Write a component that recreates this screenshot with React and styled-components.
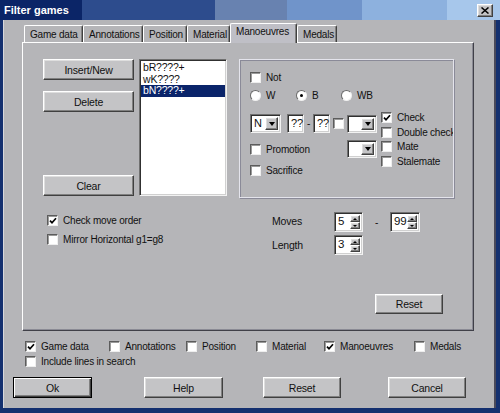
import React from "react";
import styled, { createGlobalStyle, css } from "styled-components";

const FACE = "#b5b5b8";
const BTN = "#c4c4c6";

const GlobalStyle = createGlobalStyle`
  html, body { margin: 0; padding: 0; }
  body {
    width: 500px;
    height: 413px;
    overflow: hidden;
    background: #14306f;
    font-family: "Liberation Sans", Arial, sans-serif;
    font-size: 10px;
    letter-spacing: -0.2px;
    color: #111;
  }
  * { box-sizing: border-box; }
`;

const raised = css`
  border: 1px solid;
  border-color: #ffffff #404040 #404040 #ffffff;
  box-shadow: inset -1px -1px 0 #808080, inset 1px 1px 0 #dedede;
`;

const sunken = css`
  border: 1px solid;
  border-color: #707070 #f2f2f2 #f2f2f2 #707070;
  box-shadow: inset 1px 1px 0 #303030, inset -1px -1px 0 #d0d0d0;
`;

const Window = styled.div`
  width: 500px;
  height: 413px;
  display: flex;
  flex-direction: column;
`;

const TitleBar = styled.div`
  height: 20px;
  flex: none;
  display: flex;
  align-items: center;
  padding: 0 7px 0 4px;
  background: linear-gradient(
    to right,
    #0b2567 0 82px,
    #2d4c8d 82px 215px,
    #6882b0 215px 287px,
    #7094ca 287px 362px,
    #8db1de 362px 447px,
    #a7c7eb 447px
  );
`;

const Title = styled.span`
  color: #fff;
  font-weight: bold;
  font-size: 11px;
  letter-spacing: 0;
`;

const CloseButton = styled.div`
  margin-left: auto;
  width: 16px;
  height: 13px;
  background: ${BTN};
  ${raised};
  display: flex;
  align-items: center;
  justify-content: center;
`;

const Frame = styled.div`
  flex: 1;
  display: flex;
  padding: 0 4px 5px 3px;
  background: #14306f;
`;

const Body = styled.div`
  flex: 1;
  display: flex;
  flex-direction: column;
  background: ${FACE};
  border-right: 2px solid #4a4a5a;
  border-left: 1px solid #d8d8dc;
`;

const TabArea = styled.div`
  margin: 3px 0 0 18px;
  width: 452px;
  display: flex;
  flex-direction: column;
`;

const TabStrip = styled.div`
  height: 19px;
  display: flex;
  align-items: flex-end;
  padding-left: 2px;
`;

const Tab = styled.div`
  width: ${(p) => p.$w}px;
  flex: none;
  height: ${(p) => (p.$active ? 20 : 17)}px;
  margin-bottom: ${(p) => (p.$active ? -1 : 0)}px;
  position: relative;
  z-index: ${(p) => (p.$active ? 2 : 1)};
  padding: ${(p) => (p.$active ? "2px 0 0 5px" : "3px 0 0 5px")};
  background: ${(p) => (p.$active ? "#bfbfc6" : FACE)};
  border-top: 1px solid #ffffff;
  border-left: 1px solid #ffffff;
  border-right: 1px solid #404040;
  box-shadow: inset -1px 0 0 #808080;
  border-radius: 2px 2px 0 0;
  white-space: nowrap;
`;

const Panel = styled.div`
  height: 289px;
  display: flex;
  flex-direction: column;
  padding: 16px 0 16px 20px;
  background: ${FACE};
  border: 1px solid;
  border-color: #ffffff #404048 #404048 #ffffff;
  box-shadow: inset -1px -1px 0 #8a8a94;
`;

const TopRow = styled.div`
  display: flex;
  align-items: flex-start;
  height: 139px;
`;

const ButtonCol = styled.div`
  width: 91px;
  height: 139px;
  flex: none;
  display: flex;
  flex-direction: column;
  padding-bottom: 2px;
`;

const Button = styled.div`
  width: ${(p) => p.$w}px;
  height: ${(p) => p.$h || 21}px;
  flex: none;
  margin-top: ${(p) => (p.$top === "auto" ? "auto" : `${p.$top || 0}px`)};
  margin-left: ${(p) => p.$left || 0}px;
  display: flex;
  align-items: center;
  justify-content: center;
  background: ${BTN};
  font-size: 10.5px;
  ${raised};
  ${(p) =>
    p.$default &&
    css`
      border: 1px solid #000;
      box-shadow: inset 1px 1px 0 #ffffff, inset -1px -1px 0 #404040,
        inset -2px -2px 0 #808080;
    `}
`;

const ListBox = styled.div`
  margin-left: 5px;
  width: 88px;
  height: 137px;
  flex: none;
  background: #fff;
  ${sunken};
  padding: 2px 1px;
  display: flex;
  flex-direction: column;
`;

const ListItem = styled.div`
  height: 11.5px;
  line-height: 11.5px;
  padding-left: 2px;
  font-size: 10.5px;
  background: ${(p) => (p.$selected ? "#0a246a" : "transparent")};
  color: ${(p) => (p.$selected ? "#fff" : "#111")};
`;

const GroupBox = styled.div`
  margin-left: 12px;
  width: 215px;
  height: 139px;
  flex: none;
  border: 1px solid #e4e4ec;
  box-shadow: inset 1px 1px 0 #8a8a98, 1px 1px 0 #8a8a98;
  padding: 12px 0 0 10px;
  display: flex;
  flex-direction: column;
  overflow: hidden;
`;

const Row = styled.div`
  display: flex;
  align-items: center;
  flex: none;
  margin-top: ${(p) => p.$top || 0}px;
  margin-left: ${(p) => p.$left || 0}px;
`;

const CheckRow = styled.div`
  display: flex;
  align-items: center;
  gap: 5px;
  height: 11px;
  flex: none;
  width: ${(p) => (p.$w ? `${p.$w}px` : "auto")};
  white-space: nowrap;
`;

const Box = styled.span`
  width: 11px;
  height: 11px;
  flex: none;
  background: #fff;
  border: 1px solid;
  border-color: #5c5c5c #eeeeee #eeeeee #5c5c5c;
  box-shadow: inset 1px 1px 0 #9a9a9a;
  display: flex;
  align-items: center;
  justify-content: center;
`;

const Radio = styled.span`
  width: 11px;
  height: 11px;
  flex: none;
  border-radius: 50%;
  background: #fff;
  border: 1px solid;
  border-color: #6a6a6a #f0f0f0 #f0f0f0 #6a6a6a;
  display: flex;
  align-items: center;
  justify-content: center;
  &::after {
    content: "";
    width: 3px;
    height: 3px;
    border-radius: 50%;
    background: ${(p) => (p.$on ? "#000" : "transparent")};
  }
`;

const RadioOption = styled.div`
  width: ${(p) => p.$w}px;
  flex: none;
  display: flex;
  align-items: center;
  gap: 5px;
  height: 11px;
`;

const Lower = styled.div`
  display: flex;
  margin-top: 11px;
`;

const LeftControls = styled.div`
  width: 127px;
  flex: none;
  display: flex;
  flex-direction: column;
`;

const RightChecks = styled.div`
  margin-left: 4px;
  flex: 1;
  min-width: 0;
  display: flex;
  flex-direction: column;
  gap: 3.6px;
  overflow: hidden;
`;

const ComboBox = styled.div`
  width: ${(p) => p.$w}px;
  height: ${(p) => p.$h}px;
  margin-left: ${(p) => (p.$left === "auto" ? "auto" : `${p.$left || 0}px`)};
  flex: none;
  display: flex;
  background: #fff;
  ${sunken};
  padding: 2px;
`;

const ComboValue = styled.span`
  flex: 1;
  font-size: 11px;
  line-height: 13px;
  padding-left: 1px;
`;

const ComboArrow = styled.span`
  width: 13px;
  flex: none;
  background: ${BTN};
  ${raised};
  display: flex;
  align-items: center;
  justify-content: center;
  &::after {
    content: "";
    border-left: 3.5px solid transparent;
    border-right: 3.5px solid transparent;
    border-top: 4px solid #000;
  }
`;

const Edit = styled.div`
  width: ${(p) => p.$w}px;
  height: ${(p) => p.$h}px;
  margin-left: ${(p) => p.$left || 0}px;
  flex: none;
  background: #fff;
  ${sunken};
  padding: 2px 0 0 3px;
  font-size: 11px;
  line-height: 13px;
`;

const Dash = styled.span`
  width: ${(p) => p.$w}px;
  flex: none;
  text-align: center;
`;

const MidRow = styled.div`
  display: flex;
  margin-top: 14px;
`;

const Options = styled.div`
  margin-left: 4px;
  width: 225px;
  flex: none;
  padding-top: 3px;
  display: flex;
  flex-direction: column;
  gap: 8px;
`;

const Ranges = styled.div`
  display: flex;
  flex-direction: column;
  gap: 3px;
`;

const RangeLabel = styled.span`
  width: 62px;
  flex: none;
  font-size: 10.5px;
  margin-top: ${(p) => p.$up || 0}px;
`;

const Spin = styled.div`
  width: ${(p) => p.$w}px;
  height: 20px;
  flex: none;
  display: flex;
  background: #fff;
  ${sunken};
  padding: 2px;
`;

const SpinValue = styled.span`
  flex: 1;
  font-size: 11.5px;
  line-height: 13px;
  padding-left: 1px;
`;

const SpinButtons = styled.span`
  width: 10px;
  display: flex;
  flex-direction: column;
`;

const SpinBtn = styled.span`
  flex: 1;
  background: ${BTN};
  ${raised};
  display: flex;
  align-items: center;
  justify-content: center;
  &::after {
    content: "";
    border-left: 2px solid transparent;
    border-right: 2px solid transparent;
    ${(p) =>
      p.$up
        ? css`border-bottom: 2px solid #000;`
        : css`border-top: 2px solid #000;`}
  }
`;

const ResetRow = styled.div`
  margin-top: auto;
  display: flex;
  justify-content: flex-end;
  padding-right: 30px;
`;

const BottomChecks = styled.div`
  margin: 10px 0 0 21px;
  display: flex;
  flex-direction: column;
  gap: 4px;
`;

const CheckLine = styled.div`
  display: flex;
`;

const ButtonBar = styled.div`
  display: flex;
  margin-top: 10px;
`;

const Tick = () => (
  <svg width="8" height="8" viewBox="0 0 8 8">
    <path d="M1 3.6 L3 5.8 L7 1.2" fill="none" stroke="#000" strokeWidth="1.7" />
  </svg>
);

const Checkbox = ({ checked, label, w }) => (
  <CheckRow $w={w}>
    <Box>{checked && <Tick />}</Box>
    <span>{label}</span>
  </CheckRow>
);

const Combo = ({ value, w, h, left }) => (
  <ComboBox $w={w} $h={h} $left={left}>
    <ComboValue>{value}</ComboValue>
    <ComboArrow />
  </ComboBox>
);

const SpinEdit = ({ value, w }) => (
  <Spin $w={w}>
    <SpinValue>{value}</SpinValue>
    <SpinButtons>
      <SpinBtn $up />
      <SpinBtn />
    </SpinButtons>
  </Spin>
);

const tabs = [
  { label: "Game data", w: 59 },
  { label: "Annotations", w: 60 },
  { label: "Position", w: 44 },
  { label: "Material", w: 43 },
  { label: "Manoeuvres", w: 67, active: true },
  { label: "Medals", w: 40 },
];

const moves = ["bR????+", "wK????", "bN????+"];

const filters = [
  { label: "Game data", w: 84, checked: true },
  { label: "Annotations", w: 77 },
  { label: "Position", w: 70 },
  { label: "Material", w: 68 },
  { label: "Manoeuvres", w: 90, checked: true },
  { label: "Medals" },
];

const App = () => {
  return (
    <>
      <GlobalStyle />
      <Window>
        <TitleBar>
          <Title>Filter games</Title>
          <CloseButton>
            <svg width="8" height="7" viewBox="0 0 8 7">
              <path d="M0.5 0.5 L7.5 6.5 M7.5 0.5 L0.5 6.5" stroke="#000" strokeWidth="1.5" />
            </svg>
          </CloseButton>
        </TitleBar>
        <Frame>
          <Body>
            <TabArea>
              <TabStrip>
                {tabs.map((t) => (
                  <Tab key={t.label} $w={t.w} $active={t.active}>
                    {t.label}
                  </Tab>
                ))}
              </TabStrip>
              <Panel>
                <TopRow>
                  <ButtonCol>
                    <Button $w={91}>Insert/New</Button>
                    <Button $w={91} $top={11}>Delete</Button>
                    <Button $w={91} $top="auto">Clear</Button>
                  </ButtonCol>
                  <ListBox>
                    {moves.map((m, i) => (
                      <ListItem key={m + i} $selected={i === 2}>
                        {m}
                      </ListItem>
                    ))}
                  </ListBox>
                  <GroupBox>
                    <Checkbox label="Not" />
                    <Row $top={7}>
                      <RadioOption $w={46}>
                        <Radio />
                        <span>W</span>
                      </RadioOption>
                      <RadioOption $w={45}>
                        <Radio $on />
                        <span>B</span>
                      </RadioOption>
                      <RadioOption $w={45}>
                        <Radio />
                        <span>WB</span>
                      </RadioOption>
                    </Row>
                    <Lower>
                      <LeftControls>
                        <Row $top={2}>
                          <Combo value="N" w={31} h={19} />
                          <Edit $w={17} $h={19} $left={6}>??</Edit>
                          <Dash $w={9}>-</Dash>
                          <Edit $w={17} $h={19}>??</Edit>
                          <Row $left={3}>
                            <Box />
                          </Row>
                          <Combo w={30} h={18} left={3} />
                        </Row>
                        <Row $top={7}>
                          <Checkbox label="Promotion" />
                          <Combo w={30} h={18} left="auto" />
                        </Row>
                        <Row $top={7}>
                          <Checkbox label="Sacrifice" />
                        </Row>
                      </LeftControls>
                      <RightChecks>
                        <Checkbox label="Check" checked />
                        <Checkbox label="Double check" />
                        <Checkbox label="Mate" />
                        <Checkbox label="Stalemate" />
                      </RightChecks>
                    </Lower>
                  </GroupBox>
                </TopRow>
                <MidRow>
                  <Options>
                    <Checkbox label="Check move order" checked />
                    <Checkbox label="Mirror Horizontal g1=g8" />
                  </Options>
                  <Ranges>
                    <Row>
                      <RangeLabel $up={-3}>Moves</RangeLabel>
                      <SpinEdit value="5" w={29} />
                      <Dash $w={27}>-</Dash>
                      <SpinEdit value="99" w={30} />
                    </Row>
                    <Row>
                      <RangeLabel>Length</RangeLabel>
                      <SpinEdit value="3" w={29} />
                    </Row>
                  </Ranges>
                </MidRow>
                <ResetRow>
                  <Button $w={68} $h={20}>Reset</Button>
                </ResetRow>
              </Panel>
            </TabArea>
            <BottomChecks>
              <CheckLine>
                {filters.map((f) => (
                  <Checkbox key={f.label} label={f.label} w={f.w} checked={f.checked} />
                ))}
              </CheckLine>
              <CheckLine>
                <Checkbox label="Include lines in search" />
              </CheckLine>
            </BottomChecks>
            <ButtonBar>
              <Button $w={79} $left={9} $default>Ok</Button>
              <Button $w={79} $left={52}>Help</Button>
              <Button $w={78} $left={40}>Reset</Button>
              <Button $w={78} $left={47}>Cancel</Button>
            </ButtonBar>
          </Body>
        </Frame>
      </Window>
    </>
  );
};

export default App;
